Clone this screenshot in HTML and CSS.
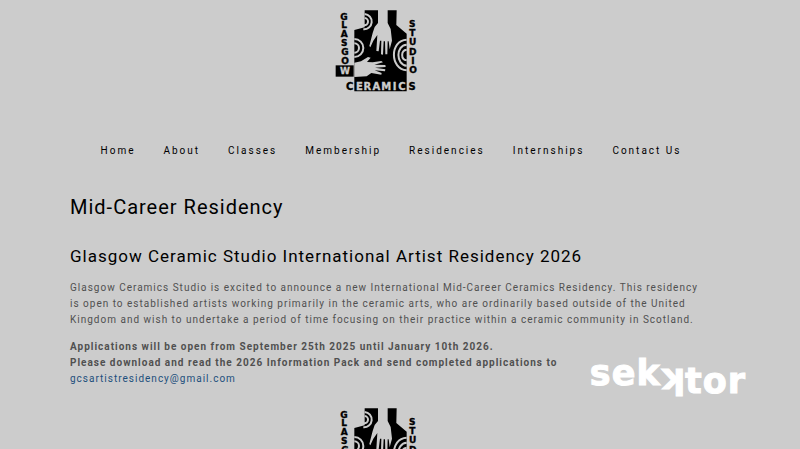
FILE: index.html
```html
<!DOCTYPE html>
<html lang="en">
<head>
    <meta charset="UTF-8">
    <meta name="viewport" content="width=device-width, initial-scale=1.0">
    <title>Mid-Career Residency</title>
    <link rel="stylesheet" href="styles.css">
</head>
<body>
    <header>
        <a href="#" class="logo">
            <svg viewBox="30 24 252 252" role="img" aria-label="Glasgow Ceramics Studio">
                <defs>
                    <g id="stamp">
                        <path d="M119 31H215L214 75L245 101V274H88V90L119 82Z"/>
                        <!-- rings -->
                        <g fill="none" stroke="#ccc" stroke-width="6">
                            <path d="M119 42A22 22 0 0 1 115 88"/>
                            <path d="M119 54A11 11 0 0 1 117 76"/>
                            <path d="M88 117A27 27 0 0 1 88 171"/>
                            <path d="M88 130A14 14 0 0 1 88 158"/>
                            <path d="M245 119C194 121 194 207 245 211"/>
                            <path d="M245 134C212 136 212 194 245 197"/>
                            <path d="M245 149C227 151 227 179 245 181"/>
                        </g>
                        <!-- hands -->
                        <path fill="#ccc" d="M159 30H188L188 69L197 87L201 122L194 148L191 124L188 124L187 163L181 163L180 124L176 124L174 164L168 163L169 122L165 122L161 154L154 153L157 105L145 122L136 142L133 138L143 99L149 81L159 69Z"/>
                        <path fill="#ccc" d="M88 188L108 184L129 171L137 173L126 186L143 187L169 183L174 187L148 194L181 195L182 201L150 203L181 208L180 214L149 211L170 219L169 224L139 219L125 229L88 231Z"/>
                        <path d="M32 196H86V230H32Z"/>
                        <!-- lettering -->
                        <g class="stamp-text">
                            <text x="57" y="59">G</text>
                            <text x="57" y="85">L</text>
                            <text x="58" y="111">A</text>
                            <text x="58" y="137">S</text>
                            <text x="60" y="164">G</text>
                            <text x="60" y="192">O</text>
                            <text class="light" x="60" y="223">W</text>
                            <text x="262" y="81">S</text>
                            <text x="262" y="109">T</text>
                            <text x="263" y="136">U</text>
                            <text x="263" y="164">D</text>
                            <text x="264" y="191">I</text>
                            <text x="264" y="219">O</text>
                            <text class="wide" x="74" y="271">C</text>
                            <g class="wide light">
                                <text x="103" y="271">E</text>
                                <text x="127" y="271">R</text>
                                <text x="154" y="271">A</text>
                                <text x="184" y="271">M</text>
                                <text x="209" y="271">I</text>
                                <text x="231" y="271">C</text>
                            </g>
                            <text class="wide" x="261" y="271">S</text>
                        </g>
                    </g>
                </defs>
                <use href="#stamp"/>
            </svg>
        </a>
        <nav>
            <a href="#">Home</a>
            <a href="#">About</a>
            <a href="#">Classes</a>
            <a href="#">Membership</a>
            <a href="#">Residencies</a>
            <a href="#">Internships</a>
            <a href="#">Contact Us</a>
        </nav>
    </header>

    <main>
        <h1>Mid-Career Residency</h1>
        <h2>Glasgow Ceramic Studio International Artist Residency 2026</h2>
        <p>Glasgow Ceramics Studio is excited to announce a new International Mid-Career Ceramics Residency. This residency is open to established artists working primarily in the ceramic arts, who are ordinarily based outside of the United Kingdom and wish to undertake a period of time focusing on their practice within a ceramic community in Scotland.</p>
        <p><strong>Applications will be open from September 25th 2025 until January 10th 2026.<br>
        Please download and read the 2026 Information Pack and send completed applications to</strong><br>
        <a href="mailto:gcsartistresidency@gmail.com">gcsartistresidency@gmail.com</a></p>
    </main>

    <footer>
        <a href="#" class="logo">
            <svg viewBox="30 24 252 252" role="img" aria-label="Glasgow Ceramics Studio"><use href="#stamp"/></svg>
        </a>
    </footer>

    <div class="watermark"><span>sek</span><span class="turned">k</span><span class="down">tor</span></div>
</body>
</html>
```

FILE: styles.css
```css
* { box-sizing: border-box; }
body { margin: 0; padding: 8px 88px 0 70px; background: #ccc; color: #505050; font: 10px/16px Roboto, sans-serif; letter-spacing: 1px; position: relative; height: 100vh; overflow: hidden; }
a { color: #1d4f7c; text-decoration: none; }

header, footer { display: flex; flex-direction: column; }
.logo { width: 84px; margin-right: 28px; align-self: center; color: #000; }
.logo svg { display: block; width: 100%; }
.stamp-text { font: bold 27px "DejaVu Sans", sans-serif; text-anchor: middle; letter-spacing: 0; stroke: #000; stroke-width: 1px; }
.stamp-text .wide { font-size: 30px; }
.stamp-text .light { fill: #ccc; stroke: #ccc; }

nav { display: flex; justify-content: center; gap: 28px; margin-top: 51px; letter-spacing: 2px; }
nav a { color: #000; }

main { padding-right: 4px; }
h1, h2 { color: #000; font-weight: 400; }
h1 { margin: 36px 0 24px; font-size: 20px; line-height: 25px; }
h2 { margin: 0 0 12px; font-size: 17px; line-height: 24px; }
p { margin: 0 0 11px; }
footer { margin-top: 19px; }

.watermark { position: absolute; right: 54px; bottom: 52px; display: flex; color: #fff; font: bold 35px/32px "DejaVu Sans", sans-serif; letter-spacing: 1px; -webkit-text-stroke: 1px #fff; }
.watermark .down { padding-top: 8px; }
.watermark .turned { transform: rotate(180deg); }
```
